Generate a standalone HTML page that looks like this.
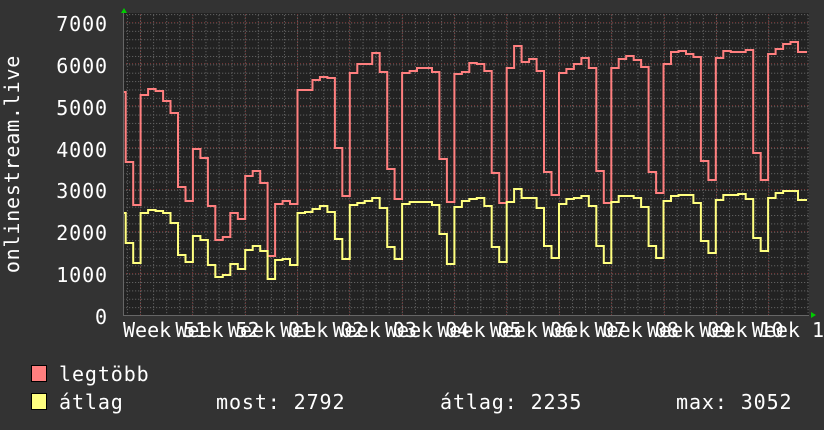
<!DOCTYPE html>
<html><head><meta charset="utf-8"><style>
html,body{margin:0;padding:0;background:#333;}
svg{display:block;}
text{font-family:"DejaVu Sans Mono","Liberation Mono",monospace;font-size:20px;fill:#fff;}
.lg{letter-spacing:0.9px;}
</style></head><body>
<svg width="824" height="430" viewBox="0 0 824 430" xmlns="http://www.w3.org/2000/svg">
<defs>
<pattern id="ph" patternUnits="userSpaceOnUse" x="0" y="315.5" width="3" height="8.372">
<rect x="0" y="0" width="1.2" height="1" fill="#606060"/>
</pattern>
<pattern id="pv" patternUnits="userSpaceOnUse" x="140" y="0" width="13.09" height="3">
<rect x="0" y="0" width="1" height="1.2" fill="#606060"/>
</pattern>
</defs>
<rect width="824" height="430" fill="#333"/>
<rect x="123" y="13" width="686" height="302" fill="#222"/>
<rect x="123" y="14" width="686" height="301" fill="url(#ph)"/>
<rect x="123" y="14" width="686" height="301" fill="url(#pv)"/>
<g stroke="#703434" stroke-width="1" stroke-dasharray="1,2">
<line x1="123" x2="809" y1="273.5" y2="273.5"/>
<line x1="123" x2="809" y1="231.5" y2="231.5"/>
<line x1="123" x2="809" y1="189.5" y2="189.5"/>
<line x1="123" x2="809" y1="147.5" y2="147.5"/>
<line x1="123" x2="809" y1="105.5" y2="105.5"/>
<line x1="123" x2="809" y1="63.5" y2="63.5"/>
<line x1="123" x2="809" y1="22.5" y2="22.5"/>
<line y1="14" y2="315" x1="140.5" x2="140.5"/>
<line y1="14" y2="315" x1="192.5" x2="192.5"/>
<line y1="14" y2="315" x1="245.5" x2="245.5"/>
<line y1="14" y2="315" x1="297.5" x2="297.5"/>
<line y1="14" y2="315" x1="349.5" x2="349.5"/>
<line y1="14" y2="315" x1="402.5" x2="402.5"/>
<line y1="14" y2="315" x1="454.5" x2="454.5"/>
<line y1="14" y2="315" x1="506.5" x2="506.5"/>
<line y1="14" y2="315" x1="559.5" x2="559.5"/>
<line y1="14" y2="315" x1="611.5" x2="611.5"/>
<line y1="14" y2="315" x1="664.5" x2="664.5"/>
<line y1="14" y2="315" x1="716.5" x2="716.5"/>
<line y1="14" y2="315" x1="768.5" x2="768.5"/>
</g>
<line x1="123" y1="315.5" x2="809" y2="315.5" stroke="#666" stroke-width="1"/>
<line x1="123.5" y1="12" x2="123.5" y2="316" stroke="#666" stroke-width="1"/>
<polygon points="121,13 124,8 127,13" fill="#0c0"/>
<polygon points="811,312 816,315 811,318" fill="#0c0"/>
<path fill="none" stroke="#ff7f7f" stroke-width="2" d="M124,92 H125.7 V162 H133.2 V205 H140.6 V95 H148.1 V89 H155.6 V91 H163.1 V101 H170.5 V113 H178 V187 H185.5 V201 H192.9 V149 H200.4 V158 H207.9 V206 H215.3 V240 H222.8 V237 H230.3 V213 H237.8 V219 H245.2 V176 H252.7 V171 H260.2 V183 H267.6 V256 H275.1 V204 H282.6 V201 H290 V204 H297.5 V90 H312.5 V80 H319.9 V77 H327.4 V78 H334.9 V148 H342.3 V196 H349.8 V73 H357.3 V64 H372.2 V53 H379.7 V72 H387.2 V169 H394.6 V199 H402.1 V73 H409.6 V71 H417 V68 H432 V72 H439.4 V159 H446.9 V202 H454.4 V74 H461.9 V72 H469.3 V63 H476.8 V64 H484.3 V71 H491.7 V173 H499.2 V203 H506.7 V68 H514.1 V46 H521.6 V62 H529.1 V59 H536.6 V71 H544 V172 H551.5 V195 H559 V73 H566.4 V69 H573.9 V64 H581.4 V58 H588.8 V68 H596.3 V171 H603.8 V203 H611.3 V68 H618.7 V59 H626.2 V56 H633.7 V60 H641.1 V67 H648.6 V172 H656.1 V193 H663.5 V64 H671 V52 H678.5 V51 H686 V54 H693.4 V57 H700.9 V161 H708.4 V180 H715.8 V58 H723.3 V51 H730.8 V52 H745.7 V50 H753.2 V153 H760.7 V180 H768.1 V54 H775.6 V49 H783.1 V44 H790.5 V42 H798 V52 H807"/>
<path fill="none" stroke="#ffff7f" stroke-width="2" d="M124,213 H125.7 V243 H133.2 V263 H140.6 V213 H148.1 V210 H155.6 V211 H163.1 V213 H170.5 V223 H178 V255 H185.5 V262 H192.9 V236 H200.4 V240 H207.9 V265 H215.3 V277 H222.8 V275 H230.3 V264 H237.8 V269 H245.2 V250 H252.7 V246 H260.2 V251 H267.6 V279 H275.1 V260 H282.6 V259 H290 V265 H297.5 V213 H305 V212 H312.5 V209 H319.9 V206 H327.4 V212 H334.9 V239 H342.3 V259 H349.8 V205 H357.3 V203 H364.7 V201 H372.2 V198 H379.7 V208 H387.2 V247 H394.6 V259 H402.1 V204 H409.6 V202 H432 V205 H439.4 V234 H446.9 V264 H454.4 V207 H461.9 V201 H469.3 V199 H476.8 V198 H484.3 V206 H491.7 V247 H499.2 V262 H506.7 V202 H514.1 V189 H521.6 V198 H536.6 V208 H544 V246 H551.5 V258 H559 V204 H566.4 V199 H573.9 V198 H581.4 V196 H588.8 V206 H596.3 V246 H603.8 V263 H611.3 V202 H618.7 V196 H633.7 V198 H641.1 V207 H648.6 V246 H656.1 V258 H663.5 V201 H671 V196 H678.5 V195 H693.4 V203 H700.9 V241 H708.4 V253 H715.8 V200 H723.3 V195 H738.2 V194 H745.7 V199 H753.2 V238 H760.7 V251 H768.1 V198 H775.6 V193 H783.1 V191 H798 V200 H807"/>
<g text-anchor="end" class="lg">
<text x="108" y="31">7000</text>
<text x="108" y="73">6000</text>
<text x="108" y="115">5000</text>
<text x="108" y="157">4000</text>
<text x="108" y="198">3000</text>
<text x="108" y="240">2000</text>
<text x="108" y="282">1000</text>
<text x="108" y="324">0</text>
</g>
<text transform="translate(19,164) rotate(-90)" text-anchor="middle" letter-spacing="0.8">onlinestream.live</text>
<g>
<text x="123" y="337">Week 51</text>
<text x="175.4" y="337">Week 52</text>
<text x="227.8" y="337">Week 01</text>
<text x="280.2" y="337">Week 02</text>
<text x="332.6" y="337">Week 03</text>
<text x="385" y="337">Week 04</text>
<text x="437.4" y="337">Week 05</text>
<text x="489.8" y="337">Week 06</text>
<text x="542.2" y="337">Week 07</text>
<text x="594.6" y="337">Week 08</text>
<text x="647" y="337">Week 09</text>
<text x="699.4" y="337">Week 10</text>
<text x="751.8" y="337">Week 11</text>
</g>
<rect x="31.5" y="365.5" width="15" height="16" fill="#ff7f7f" stroke="#000" stroke-width="1"/>
<rect x="31.5" y="393.5" width="15" height="16" fill="#ffff7f" stroke="#000" stroke-width="1"/>
<g class="lg">
<text x="59" y="381">legtöbb</text>
<text x="59" y="409">átlag</text>
<text x="216" y="409">most: 2792</text>
<text x="440" y="409">átlag: 2235</text>
<text x="676" y="409">max: 3052</text>
</g>
</svg>
</body></html>
